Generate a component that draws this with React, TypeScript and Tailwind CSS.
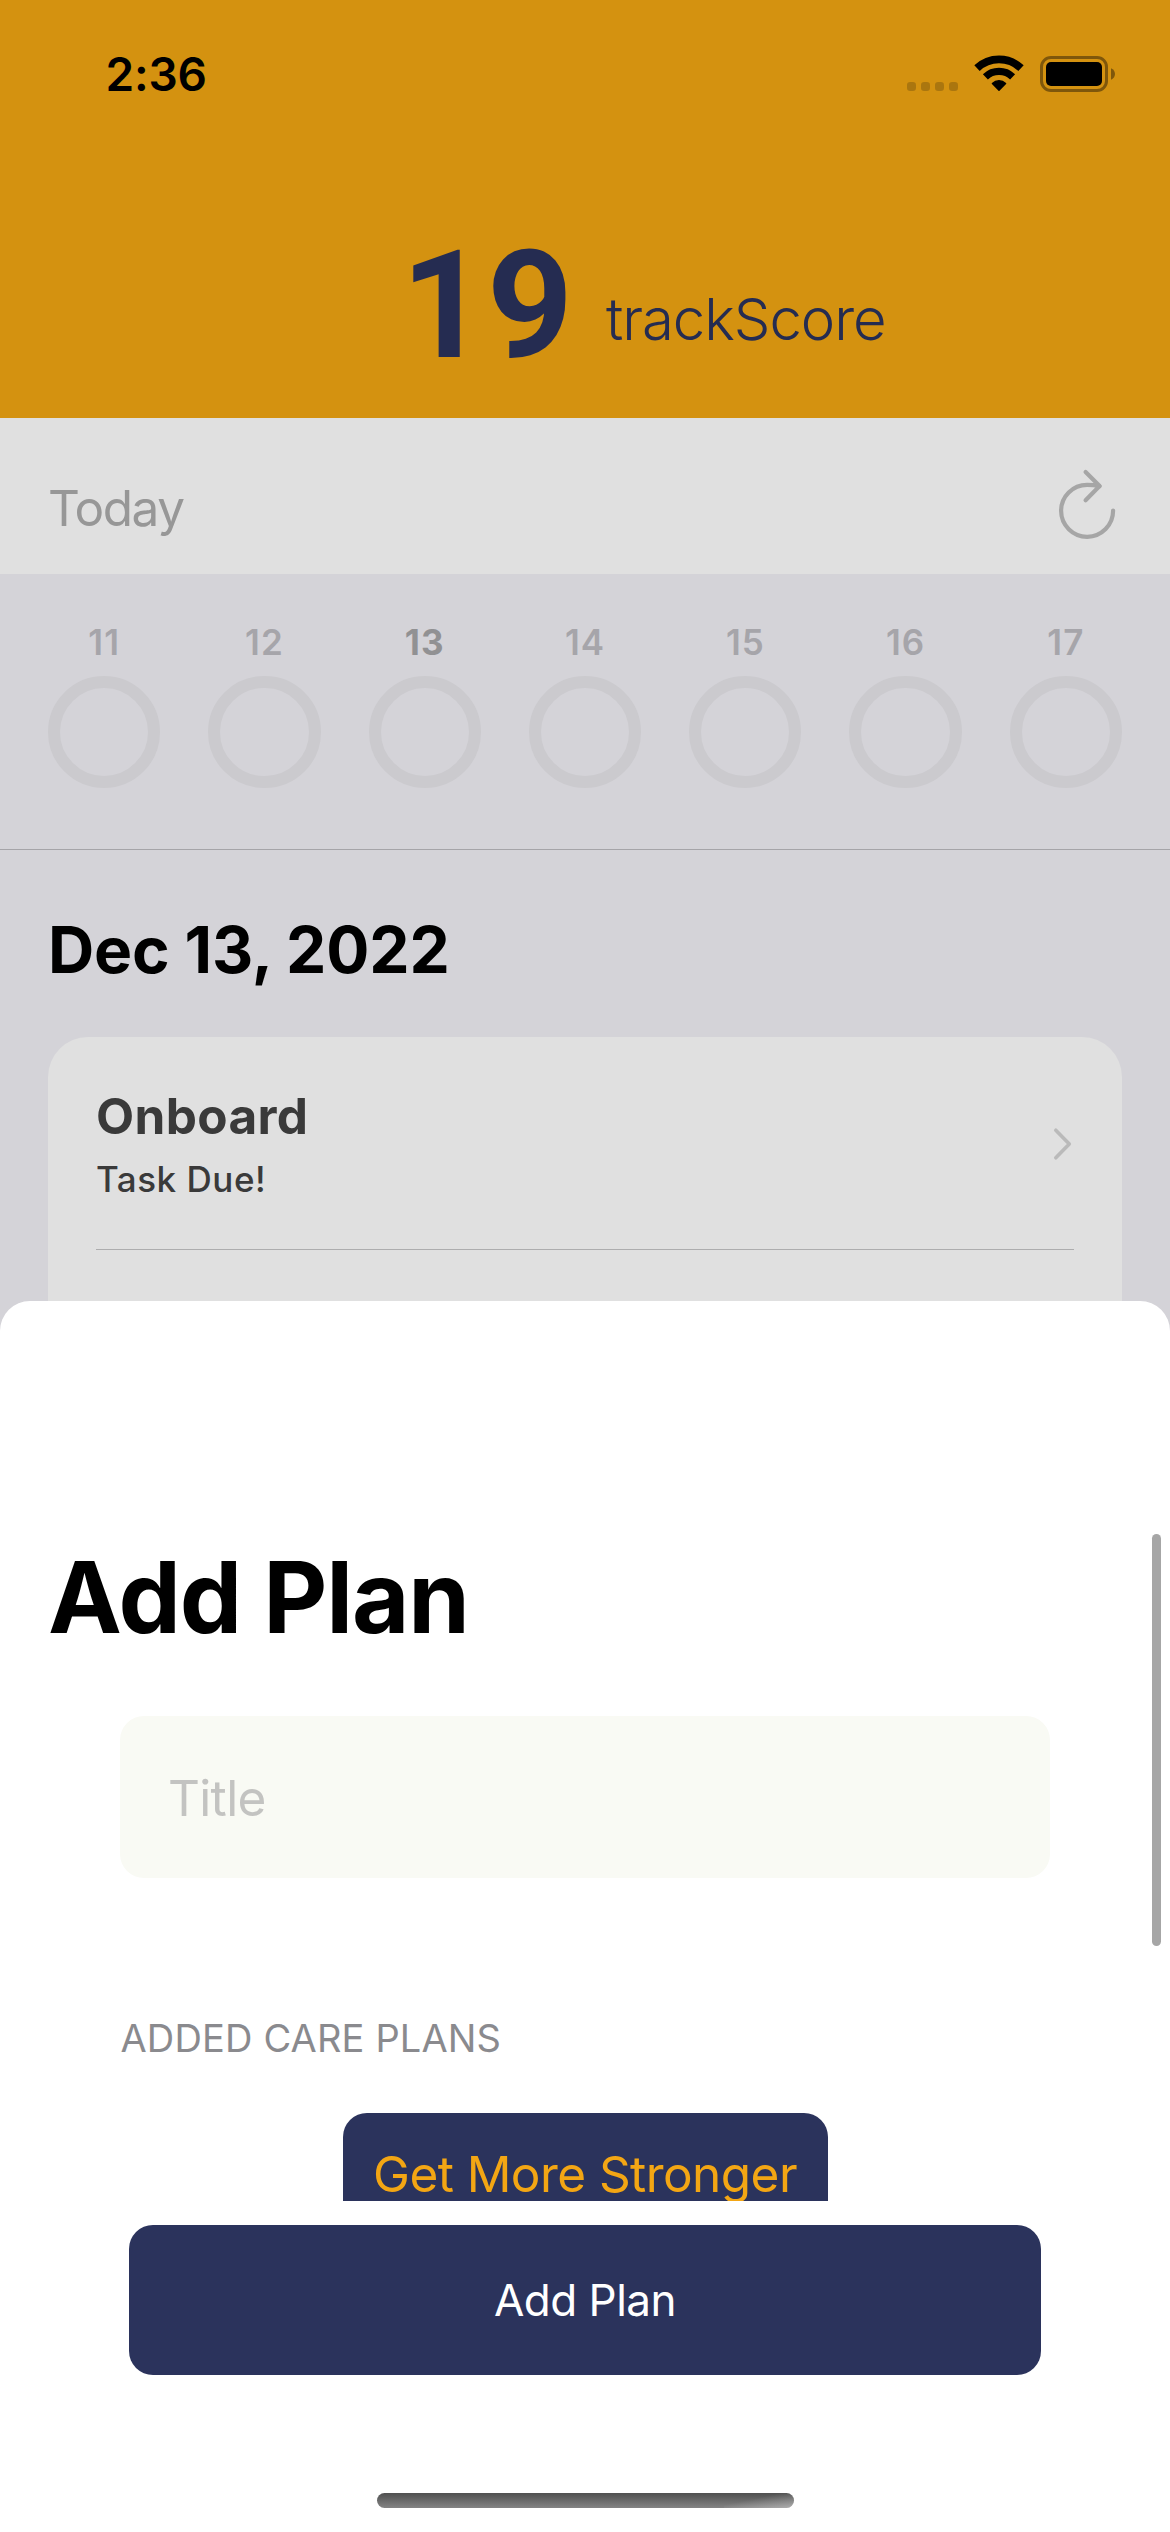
const days = ['11', '12', '13', '14', '15', '16', '17'];

function StatusIcons() {
  return (
    <svg width="209" height="48" viewBox="907 50 209 48" fill="none" aria-label="Signal, Wi-Fi, battery">
      <g fill="#aa760f">
        <rect x="907" y="82" width="9" height="9" rx="3.2" />
        <rect x="921" y="82" width="9" height="9" rx="3.2" />
        <rect x="935" y="82" width="9" height="9" rx="3.2" />
        <rect x="949" y="82" width="9" height="9" rx="3.2" />
      </g>
      <path d="M977 68.2A32 32 0 0 1 1021 68.2" stroke="#000" strokeWidth="7.8" />
      <path d="M985.4 76.9A19.6 19.6 0 0 1 1012.6 76.9" stroke="#000" strokeWidth="7.2" />
      <path d="M999 90.2L992.4 83.4A9.6 9.6 0 0 1 1005.6 83.4Z" fill="#000" stroke="#000" strokeWidth="1.4" strokeLinejoin="round" />
      <rect x="1041.5" y="57.5" width="65" height="33" rx="9.5" stroke="#7f570b" strokeWidth="3" />
      <rect x="1046" y="62" width="56" height="24" rx="5" fill="#000" />
      <path d="M1111 68.3C1113.4 69.3 1115 71.5 1115 74S1113.4 78.8 1111 79.8Z" fill="#7f570b" />
    </svg>
  );
}

function ReloadIcon() {
  return (
    <svg width="63" height="78" viewBox="1059 466 63 78" fill="none" stroke="#a6a6a6" strokeWidth="4.2" strokeLinecap="round" strokeLinejoin="round">
      <path d="M1113.1 510.6A26 26 0 1 1 1087.1 484.8Q1094 484.8 1099.5 486.2" />
      <path d="M1085.6 472L1099.6 486.1L1085.6 500.2" />
    </svg>
  );
}

function DayRing({ day }: { day: string }) {
  return (
    <div className="flex flex-col items-center">
      <span
        className={
          day === '13'
            ? 'text-[35px] leading-[40px] font-bold tracking-[1px] text-[#919193]'
            : 'text-[35px] leading-[40px] font-semibold tracking-[1px] text-[#a6a5aa]'
        }
      >
        {day}
      </span>
      <span className="mt-[14px] aspect-square w-full rounded-full border-[12px] border-[#cbcace]" />
    </div>
  );
}

function TaskCard() {
  return (
    <section className="mx-12 mt-[47px] h-[400px] rounded-[40px] bg-[#e0e0e0] px-12 pt-[49px]">
      <div className="flex items-center justify-between border-b border-[#adadae] pb-12 text-[#3a3a3a]">
        <div>
          <h3 className="text-[49.5px] leading-[60px] font-bold tracking-[0.35px]">Onboard</h3>
          <p className="mt-[11px] text-[35px] leading-[44px] font-medium tracking-[0.53px]">Task Due!</p>
        </div>
        <svg width="22" height="34" viewBox="0 0 22 34" fill="none" stroke="#bababa" strokeWidth="3.6" strokeLinecap="round" strokeLinejoin="round">
          <path d="M3.8 3.2L17.3 17L3.8 30.8" />
        </svg>
      </div>
    </section>
  );
}

function AddPlanSheet() {
  return (
    <div className="absolute inset-x-0 top-[1301px] bottom-0 flex flex-col rounded-t-[30px] bg-white pt-[236px]">
      <h1 className="ml-12 text-[99px] leading-[120px] font-bold tracking-[-1.14px]">Add Plan</h1>
      <div className="mx-[120px] mt-[59px] flex h-[162px] items-center rounded-[24px] bg-[#f9faf4] px-12 pt-0.5 text-[49.5px] tracking-[-0.66px] text-[#c3c3c1]">
        Title
      </div>
      <h2 className="mt-[136px] ml-[120.5px] text-[38px] leading-[48px] tracking-[0.15px] text-[#8a8a8e]">ADDED CARE PLANS</h2>
      <div className="mt-[51px] h-[88px] shrink-0 overflow-hidden">
        <div className="mx-auto h-[120px] w-[485px] rounded-[24px] bg-[#2b335c] pt-[31px] text-center text-[49.5px] leading-[60px] tracking-[-0.56px] whitespace-nowrap text-[#f3a614]">
          Get More Stronger
        </div>
      </div>
      <button className="mx-[129px] mt-[24px] h-[150px] shrink-0 rounded-[24px] bg-[#2b335c] text-[44px] tracking-[-0.5px] text-white">Add Plan</button>
      <div className="mx-auto mt-[118px] flex h-[15px] w-[417px] shrink-0 justify-end overflow-hidden rounded-full bg-linear-to-b from-[#505050] to-[#848484]">
        <div className="h-full w-[70px] bg-linear-to-br from-transparent from-40% to-white/35" />
      </div>
      <div className="absolute top-[233px] right-[9px] h-[412px] w-[9px] rounded-full bg-[#a6a6a6]" />
    </div>
  );
}

export default function App() {
  return (
    <main className="relative h-[2532px] w-[1170px] overflow-hidden bg-[#d4d3d8] font-['Inter',sans-serif] text-black">
      <header className="h-[418px] bg-[#d49210]">
        <div className="flex h-[148px] items-center justify-between pr-[54px] pl-[105.5px]">
          <span className="text-[46px] leading-none font-semibold tracking-[-0.2px]">2:36</span>
          <StatusIcons />
        </div>
        <div className="flex items-start pl-[401px] text-[#252c51]">
          <span className="mt-[78px] w-[205px] font-['Roboto',sans-serif] text-[150px] leading-[160px] font-bold">19</span>
          <span className="mt-[136px] text-[58px] leading-[70px] font-light tracking-[-1.05px]">trackScore</span>
        </div>
      </header>
      <div className="flex h-[156px] items-start justify-between bg-[#e0e0e0] px-12 pt-12">
        <span className="mt-3 text-[49.5px] leading-[60px] tracking-[-1.5px] text-[#979797]">Today</span>
        <ReloadIcon />
      </div>
      <div className="grid h-[276px] grid-cols-7 gap-12 border-b border-[#a5a4a8] px-12 pt-12">
        {days.map((day) => (
          <DayRing key={day} day={day} />
        ))}
      </div>
      <h2 className="mt-[60px] ml-12 text-[64px] leading-[80px] font-bold tracking-[-0.15px]">Dec 13, 2022</h2>
      <TaskCard />
      <AddPlanSheet />
    </main>
  );
}
